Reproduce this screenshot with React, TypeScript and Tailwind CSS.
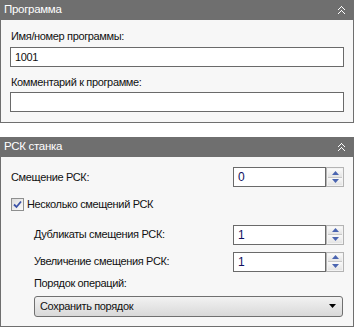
import React from 'react';

const font = { fontFamily: '"Liberation Sans", Arial, sans-serif' };

const Collapse = () => (
  <svg width="9" height="9" viewBox="0 0 9 9" shapeRendering="crispEdges">
    <path d="M4 0h1v1H4zM3 1h1v1H3zM5 1h1v1H5zM2 2h1v1H2zM6 2h1v1H6zM1 3h1v1H1zM7 3h1v1H7z" fill="#fff" />
    <path d="M4 4h1v1H4zM3 5h1v1H3zM5 5h1v1H5zM2 6h1v1H2zM6 6h1v1H6zM1 7h1v1H1zM7 7h1v1H7z" fill="#fff" />
  </svg>
);

const Header = ({ title }: { title: string }) => (
  <div className="flex h-[20px] items-center justify-between bg-[#6f6f6f] pl-[4px] pr-[8px] text-[11.5px] tracking-[-0.3px] text-white">
    <span>{title}</span>
    <Collapse />
  </div>
);

const Spinner = ({ value }: { value: string }) => (
  <div className="flex h-[20px]">
    <div className="flex w-[93px] items-center border border-[#6a6a6a] bg-white pl-[4px] text-[12px] text-[#101060]">
      {value}
    </div>
    <div className="flex w-[18px] flex-col border border-[#b4b4b4] bg-[#f3f3f3] p-[1px]">
      <div className="flex flex-1 items-center justify-center border-b border-[#c8c8c8] bg-gradient-to-b from-[#fafafa] to-[#e4e4e4]">
        <svg width="7" height="4" viewBox="0 0 7 4">
          <path d="M3.5 0L7 4H0z" fill="#4a64b0" />
        </svg>
      </div>
      <div className="flex flex-1 items-center justify-center bg-gradient-to-b from-[#fafafa] to-[#e4e4e4]">
        <svg width="7" height="4" viewBox="0 0 7 4">
          <path d="M0 0h7L3.5 4z" fill="#4a64b0" />
        </svg>
      </div>
    </div>
  </div>
);

const SpinRow = ({ label, value, indent }: { label: string; value: string; indent?: boolean }) => (
  <div className={`flex items-center justify-between pr-[9px] ${indent ? 'pl-[33px]' : 'pl-[10px]'}`}>
    <span>{label}</span>
    <Spinner value={value} />
  </div>
);

const App: React.FC = () => {
  return (
    <div className="w-[354px] h-[327px] bg-white text-[11px] tracking-[-0.35px] text-[#111]" style={font}>
      <Header title="Программа" />
      <div className="h-[103px] border-x border-b border-[#6f6f6f] bg-[#f7f7f7] px-[9px] pt-[10px]">
        <div className="pl-[1px] leading-[13px]">Имя/номер программы:</div>
        <div className="mt-[4px] flex h-[20px] items-center border border-[#6a6a6a] bg-white pl-[4px]">1001</div>
        <div className="mt-[9px] pl-[1px] leading-[13px]">Комментарий к программе:</div>
        <div className="mt-[3px] h-[20px] border border-[#6a6a6a] bg-white" />
      </div>

      <div className="mt-[14px]">
        <Header title="РСК станка" />
        <div className="h-[170px] border-x border-b border-[#6f6f6f] bg-[#f7f7f7] pt-[10px]">
          <SpinRow label="Смещение РСК:" value="0" />
          <div className="mt-[9px] flex items-center pl-[10px]">
            <div className="flex h-[13px] w-[13px] items-center justify-center border border-[#8e8f8f] bg-gradient-to-br from-[#dcdcdc] to-[#fbfbfb]">
              <svg width="9" height="9" viewBox="0 0 9 9">
                <path d="M1 4.5L3.5 7L8 1.5" stroke="#3b52a8" strokeWidth="1.8" fill="none" />
              </svg>
            </div>
            <span className="ml-[3px]">Несколько смещений РСК</span>
          </div>
          <div className="mt-[12px]">
            <SpinRow label="Дубликаты смещения РСК:" value="1" indent />
          </div>
          <div className="mt-[7px]">
            <SpinRow label="Увеличение смещения РСК:" value="1" indent />
          </div>
          <div className="mt-[5px] pl-[33px] leading-[13px]">Порядок операций:</div>
          <div className="ml-[33px] mr-[10px] mt-[6px] flex h-[21px] items-center justify-between rounded-[3px] border border-[#707070] bg-gradient-to-b from-[#f2f2f2] to-[#d9d9d9] pl-[5px] pr-[6px]">
            <span>Сохранить порядок</span>
            <svg width="7" height="4" viewBox="0 0 7 4">
              <path d="M0 0h7L3.5 4z" fill="#000" />
            </svg>
          </div>
        </div>
      </div>
    </div>
  );
};

export default App;
